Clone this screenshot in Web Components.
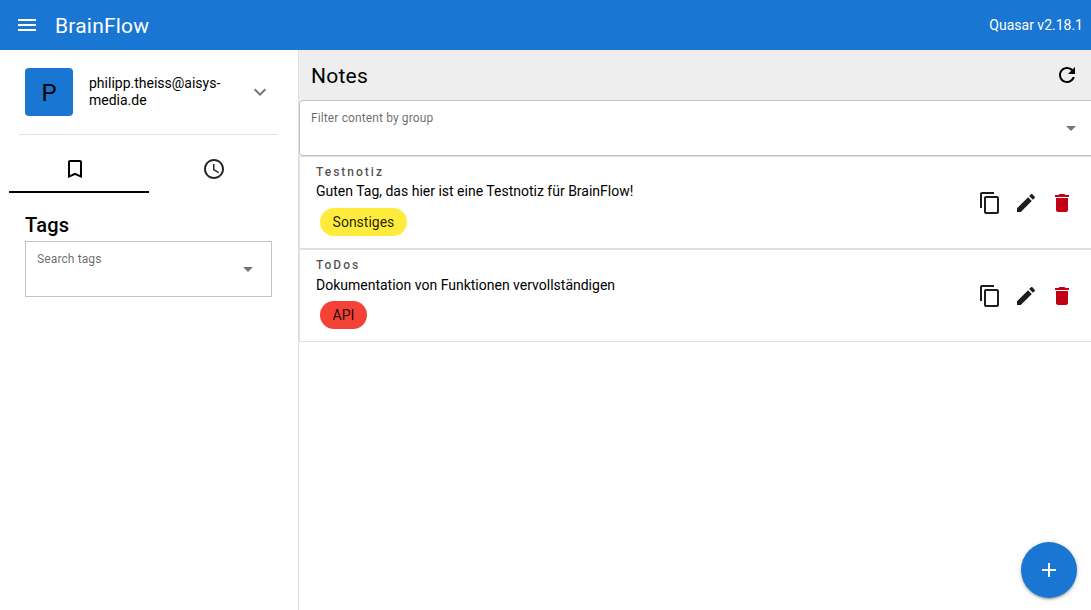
<!DOCTYPE html>
<html lang="de">
<head>
<meta charset="utf-8">
<title>BrainFlow</title>
<style>
html, body { margin: 0; height: 100%; overflow: hidden; }
body { font: 14px/1.5 Roboto, "Liberation Sans", sans-serif; color: #000; background: #fff; }
</style>
</head>
<body>
<brain-app></brain-app>
<script>
const ICONS = {
  menu: 'M3 18h18v-2H3v2zm0-5h18v-2H3v2zm0-7v2h18V6H3z',
  expand: 'M16.59 8.59L12 13.17 7.41 8.59 6 10l6 6 6-6z',
  drop: 'M7 10l5 5 5-5z',
  bookmark: 'M17 3H7c-1.1 0-1.99.9-1.99 2L5 21l7-3 7 3V5c0-1.1-.9-2-2-2zm0 15l-5-2.18L7 18V5h10v13z',
  clock: 'M11.99 2C6.47 2 2 6.48 2 12s4.47 10 9.99 10C17.52 22 22 17.52 22 12S17.52 2 11.99 2zM12 20c-4.42 0-8-3.58-8-8s3.58-8 8-8 8 3.58 8 8-3.58 8-8 8zm.5-13H11v6l5.25 3.15.75-1.23-4.5-2.67z',
  refresh: 'M17.65 6.35C16.2 4.9 14.21 4 12 4c-4.42 0-7.99 3.58-7.99 8s3.57 8 7.99 8c3.73 0 6.84-2.55 7.73-6h-2.08c-.82 2.33-3.04 4-5.65 4-3.31 0-6-2.69-6-6s2.69-6 6-6c1.66 0 3.14.69 4.22 1.78L13 11h7V4l-2.35 2.35z',
  copy: 'M16 1H4c-1.1 0-2 .9-2 2v14h2V3h12V1zm3 4H8c-1.1 0-2 .9-2 2v14c0 1.1.9 2 2 2h11c1.1 0 2-.9 2-2V7c0-1.1-.9-2-2-2zm0 16H8V7h11v14z',
  edit: 'M3 17.25V21h3.75L17.81 9.94l-3.75-3.75L3 17.25zM20.71 7.04c.39-.39.39-1.02 0-1.41l-2.34-2.34c-.39-.39-1.02-.39-1.41 0l-1.83 1.83 3.75 3.75 1.83-1.83z',
  delete: 'M6 19c0 1.1.9 2 2 2h8c1.1 0 2-.9 2-2V7H6v12zM19 4h-3.5l-1-1h-5l-1 1H5v2h14V4z',
  add: 'M19 13h-6v6h-2v-6H5v-2h6V5h2v6h6v2z'
};
const define = (name, html) => customElements.define(name, class extends HTMLElement {
  connectedCallback() {
    if (this.shadowRoot) return;
    this.attachShadow({ mode: 'open' }).innerHTML = typeof html === 'function' ? html(this) : html;
  }
});

define('md-icon', el => `
<style>:host{display:block;width:24px;height:24px;flex:none}svg{display:block;fill:currentColor}</style>
<svg width="24" height="24" viewBox="0 0 24 24"><path d="${ICONS[el.getAttribute('name')]}"/></svg>`);

define('app-header', `
<style>
:host{display:flex;align-items:center;height:50px;box-sizing:border-box;padding:0 8px 0 15px;background:#1976d2;color:#fff}
h1{flex:1;margin:2px 0 0 16px;font-size:21px;line-height:32px;font-weight:400;letter-spacing:.21px}
</style>
<md-icon name="menu"></md-icon><h1><slot></slot></h1><slot name="version"></slot>`);

define('select-field', `
<style>
:host{display:flex;box-sizing:border-box;height:56px;border:1px solid #c2c2c2;padding:0 11px;align-items:center;background:#fff}
span{flex:1;align-self:flex-start;margin-top:9px;font-size:12px;line-height:16px;letter-spacing:.12px;color:rgba(0,0,0,.6)}
md-icon{color:rgba(0,0,0,.54)}
</style>
<span><slot></slot></span><md-icon name="drop"></md-icon>`);

define('user-card', `
<style>
:host{display:flex;align-items:center;height:85px;margin:0 20px 0 19px;padding:0 6px 1px;box-sizing:border-box;border-bottom:1px solid #e0e0e0}
.avatar{width:48px;height:48px;border-radius:4px;background:#1976d2;font-size:24px;line-height:50px;text-align:center}
.mail{flex:1;margin-left:16px;font-size:14px;line-height:17px}
md-icon{color:rgba(0,0,0,.54)}
</style>
<div class="avatar">P</div><div class="mail"><slot></slot></div><md-icon name="expand"></md-icon>`);

define('side-tabs', `
<style>
:host{display:flex;height:48px;margin:10px 9px 0}
div{width:140px;box-sizing:border-box;display:flex;padding:12px 0 0 54px}
.on{border-bottom:2px solid #000}
.off{padding-left:53.4px;color:rgba(0,0,0,.85)}
</style>
<div class="on"><md-icon name="bookmark"></md-icon></div><div class="off"><md-icon name="clock"></md-icon></div>`);

define('side-drawer', `
<style>
:host{display:block;width:299px;box-sizing:border-box;border-right:1px solid #e0e0e0;flex:none}
h2{margin:16px 0 0 25px;font-size:20px;line-height:32px;font-weight:500;letter-spacing:.25px}
select-field{margin:0 26px 0 25px}
</style>
<user-card>philipp.theiss@aisys-<br>media.de</user-card>
<side-tabs></side-tabs>
<h2>Tags</h2>
<select-field>Search tags</select-field>`);

define('tag-chip', `
<style>
:host{display:block;width:max-content;height:28px;box-sizing:border-box;margin:4px;padding:0 12.6px;border-radius:14px;background:var(--chip);font-size:14px;line-height:28px;color:rgba(0,0,0,.87)}
</style><slot></slot>`);

define('note-item', `
<style>
:host{display:flex;align-items:center;height:93px;box-sizing:border-box;border:1px solid #e0e0e0;border-right:0;padding:8px 17px 8px 16px}
.body{flex:1;align-self:stretch}
.title{font-size:12px;line-height:14px;font-weight:500;letter-spacing:2px;color:rgba(0,0,0,.7)}
.text{box-sizing:border-box;height:25px;padding-top:4px;line-height:17px}
:host(:last-of-type) .text{padding-top:5px}
.actions{display:flex;gap:12px;color:#1d1d1d;margin-top:1px}
.del{color:#c10015}
</style>
<div class="body"><div class="title"><slot name="title"></slot></div><div class="text"><slot></slot></div><slot name="tag"></slot></div>
<div class="actions"><md-icon name="copy"></md-icon><md-icon name="edit"></md-icon><md-icon class="del" name="delete"></md-icon></div>`);

define('notes-page', `
<style>
:host{display:block;flex:1;min-width:0}
header{display:flex;align-items:center;height:50px;box-sizing:border-box;padding:0 12px;background:#eee}
h2{flex:1;margin:2px 0 0;font-size:21px;line-height:32px;font-weight:400;letter-spacing:.26px}
select-field{border-right:0;border-radius:4px 0 0 4px;padding-right:8px}
</style>
<header><h2>Notes</h2><md-icon name="refresh"></md-icon></header>
<select-field>Filter content by group</select-field>
<note-item><span slot="title">Testnotiz</span>Guten Tag, das hier ist eine Testnotiz für BrainFlow!<tag-chip slot="tag" style="--chip:#ffeb3b">Sonstiges</tag-chip></note-item>
<note-item><span slot="title">ToDos</span>Dokumentation von Funktionen vervollständigen<tag-chip slot="tag" style="--chip:#f44336">API</tag-chip></note-item>`);

define('add-button', `
<style>
:host{position:fixed;right:14px;bottom:12px;width:56px;height:56px;border-radius:50%;background:#1976d2;color:#fff;display:flex;align-items:center;justify-content:center;box-shadow:0 1px 5px rgba(0,0,0,.2),0 2px 2px rgba(0,0,0,.14),0 3px 1px -2px rgba(0,0,0,.12)}
</style><md-icon name="add"></md-icon>`);

define('brain-app', `
<style>
:host{display:flex;flex-direction:column;height:100vh}
main{flex:1;display:flex;min-height:0}
</style>
<app-header>BrainFlow<span slot="version">Quasar v2.18.1</span></app-header>
<main><side-drawer></side-drawer><notes-page></notes-page></main>
<add-button></add-button>`);
</script>
</body>
</html>
